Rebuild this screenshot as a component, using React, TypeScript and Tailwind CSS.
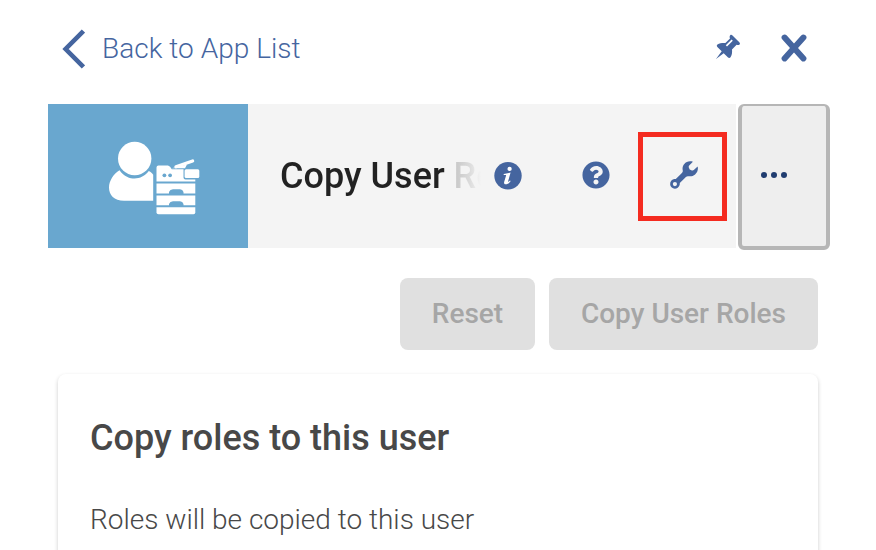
import React from "react";
import { FaQuestionCircle } from "react-icons/fa";

function ChevronIcon() {
  return (
    <svg className="h-[40px] w-[24px]" viewBox="0 0 24 40" fill="none" stroke="#45659f" strokeWidth="4.6">
      <path d="M22.4 2 L4.6 20 L22.4 38" />
    </svg>
  );
}

function PinIcon() {
  return (
    <svg className="h-[26px] w-[26px]" viewBox="0 0 26 26" fill="#45659f">
      <path
        fillRule="evenodd"
        d="M15.2 1.2C16 .5 16.800 .8 17.500 1.500L24.300 8.300C25.200 9.200 25.100 9.900 24.600 10.400C23.800 11.200 22.600 11.100 21.600 10.800L17 15.400C17.300 18.200 17 21 15.500 23.200C14.800 24.300 13.600 24 12.800 23.200L8.700 19.200L1 25L6.700 17.200L2.600 13.200C1.700 12.300 1.500 11.200 2.500 10.600C4.700 9.200 7.500 8.900 10.400 9.100L15 4.500C14.600 3.400 14.400 2 15.200 1.200ZM10.800 11.300L12 12.500L17.800 6.700L16.600 5.500Z"
      />
    </svg>
  );
}

function CloseIcon() {
  return (
    <svg className="h-[28px] w-[26px]" viewBox="0 0 26 28" stroke="#45659f" strokeWidth="6" strokeLinecap="round">
      <path d="M3.600 3.600L22.400 24.400M22.400 3.600L3.600 24.400" />
    </svg>
  );
}

function UserCopierIcon() {
  return (
    <svg className="h-[74px] w-[92px]" viewBox="0 0 92 74">
      <path
        fill="#fff"
        d="M11.500 29.200C16 35.800 22 37.500 26.500 37.500C32 37.500 37 34.800 40.800 30C42.800 31.100 44.400 32.300 45.200 33.800V59.800H16C6 59.800 1 54.200 1 46.500C1 40 5.500 32.800 11.500 29.200Z"
      />
      <circle cx="26.700" cy="17.500" r="16.700" fill="#fff" />
      <path fill="#fff" d="M48.500 26.600Q48.500 24.600 50.500 24.600H60Q62.300 25.300 63.800 28.200H75.500V36.500Q75.500 38.500 77.500 38.500H87.300V40.500H48.500Z" />
      <path d="M68 25.800L84.600 20" stroke="#fff" strokeWidth="3.300" strokeLinecap="round" />
      <path d="M63.600 27.200H77L79 23.500Z" fill="#fff" />
      <rect x="76.600" y="28.200" width="14.700" height="8.700" rx="1.500" fill="#fff" />
      <circle cx="56.400" cy="34.300" r="1.900" fill="#69a7cf" />
      <circle cx="62.100" cy="34.300" r="1.900" fill="#69a7cf" />
      <path fill="#fff" d="M48.500 42.500H87.300V52.500H75.500V51Q74.700 48.300 72 48.300H65Q62 48.300 61 51V52.500H48.500Z" />
      <path fill="#fff" d="M48.500 54.500H87.300V64.300H75.500V63Q74.700 60.300 72 60.300H65Q62 60.300 61 63V64.300H48.500Z" />
      <path fill="#fff" d="M48.500 66.300H87.300V71.500Q87.300 73.300 85.500 73.300H50.500Q48.500 73.300 48.500 71.500Z" />
    </svg>
  );
}

function InfoIcon() {
  return (
    <svg className="h-[28px] w-[28px] shrink-0" viewBox="0 0 28 28">
      <circle cx="14" cy="13.700" r="13.700" fill="#45659f" />
      <circle cx="15.600" cy="6.900" r="2.150" fill="#fff" />
      <path
        fill="#fff"
        d="M9.800 12L16.600 10.600L14.100 19.300C13.900 20.100 14.500 20 15.900 18.400L16.700 19C14.900 21.500 13.300 22.300 11.600 22.300C10.200 22.300 9.800 21.200 10.200 19.800L12.100 13.400C12.200 12.800 11 12.900 9.600 13Z"
      />
    </svg>
  );
}

function WrenchIcon() {
  return (
    <svg className="h-[28px] w-[28px]" viewBox="0 0 28 28" fill="#45659f">
      <path
        fillRule="evenodd"
        d="M22.900 .8C19.500-.3 16.200 .7 14.300 3C12.600 5 12.200 7.200 12.800 9.700C12.900 10.500 12.600 11.300 11.900 12L5.800 18.100C4 18 2.200 18.500 1.100 20.100C-.3 22-.1 24.600 1.500 26.300C3.200 27.900 5.800 28.100 7.700 26.700C9.300 25.600 9.900 23.800 9.800 22.100L15.900 16C16.700 15.300 17.400 15.100 18.200 15.200C20.800 15.700 23.200 15.100 25.100 13.400C27.600 11.200 28.400 8.200 27.600 5.400L23.800 9.100Q23 9.700 21.900 9.400L19.700 8.600L18.800 6.400Q18.500 5.200 19.200 4.500ZM4.900 21A2.100 2.100 0 1 0 4.900 25.200A2.100 2.100 0 1 0 4.900 21Z"
      />
    </svg>
  );
}

export default function App() {
  return (
    <div className="flex h-[550px] w-[876px] flex-col overflow-hidden bg-white pl-12 pr-[46px] font-['Roboto',sans-serif]">
      <nav className="flex h-[104px] shrink-0 items-start justify-between pr-[23px] text-[#45659f]">
        <button className="flex items-start pl-[13px] pt-[29px]">
          <ChevronIcon />
          <span className="ml-[17px] whitespace-nowrap text-[28px] font-light leading-[40px] tracking-[0.03px]">Back to App List</span>
        </button>
        <div className="flex items-start gap-[40px] pt-[34px]">
          <button aria-label="Pin">
            <PinIcon />
          </button>
          <button aria-label="Close">
            <CloseIcon />
          </button>
        </div>
      </nav>

      <header className="flex h-[146px] shrink-0 items-start">
        <div className="flex h-36 flex-1 items-center bg-[#f4f4f4]">
          <div className="flex h-36 w-[200px] shrink-0 items-center justify-center bg-[#69a7cf] pl-[12px] pt-[4px]">
            <UserCopierIcon />
          </div>
          <h1 className="ml-8 w-[201px] overflow-hidden whitespace-nowrap bg-[linear-gradient(to_right,#222_0,#222_170px,#c6c6c6_174px,#dcdcdc_190px,#f4f4f4_201px)] bg-clip-text text-[36px] font-medium leading-[48px] text-transparent">
            Copy User Roles
          </h1>
          <div className="ml-[13px] flex items-center pb-[2px]">
            <div className="pt-[2px]">
              <InfoIcon />
            </div>
            <FaQuestionCircle className="ml-[60px] h-[28px] w-[28px] shrink-0 text-[#45659f]" />
            <button
              className="ml-[28px] mt-[3px] flex h-[89px] w-[89px] items-center justify-center border-[5px] border-[#f42b20] pb-[3px] pl-[3px]"
              aria-label="Settings"
            >
              <WrenchIcon />
            </button>
          </div>
        </div>
        <button
          className="ml-[2px] flex h-[146px] w-[92px] shrink-0 items-center gap-[4px] rounded-[6px] border-4 border-t-2 border-[#b6b6b6] bg-[#eee] pb-[2px] pl-[19px]"
          aria-label="More"
        >
          <span className="h-[6px] w-[6px] rounded-full bg-[#203d70]" />
          <span className="h-[6px] w-[6px] rounded-full bg-[#203d70]" />
          <span className="h-[6px] w-[6px] rounded-full bg-[#203d70]" />
        </button>
      </header>

      <div className="mt-7 flex shrink-0 justify-end gap-[14px] pr-3 text-[28px] font-medium leading-[72px] text-[#a6a6a6]">
        <button className="h-[72px] w-[135px] rounded-lg bg-[#e0e0e0]">Reset</button>
        <button className="h-[72px] w-[269px] whitespace-nowrap rounded-lg bg-[#e0e0e0]">Copy User Roles</button>
      </div>

      <section className="ml-[10px] mr-3 mt-6 h-[200px] shrink-0 rounded-lg bg-white px-8 pt-[40px] shadow-[0_2px_4px_rgba(0,0,0,0.2)]">
        <h2 className="whitespace-nowrap text-[36px] font-medium leading-[48px] text-[#484848]">Copy roles to this user</h2>
        <p className="mt-[38px] whitespace-nowrap text-[28px] font-light leading-[40px] text-[#484848]">Roles will be copied to this user</p>
      </section>
    </div>
  );
}
